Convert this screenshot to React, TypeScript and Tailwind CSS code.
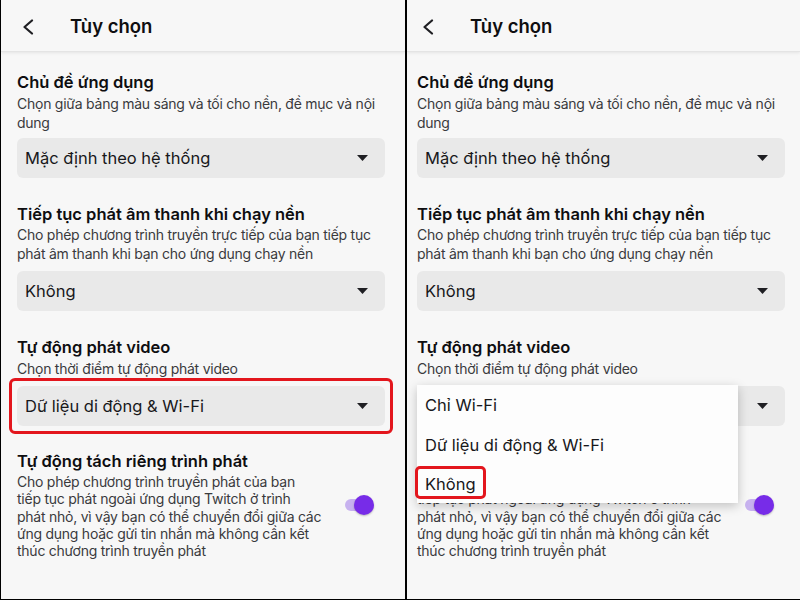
import React from "react";

const FONT = { fontFamily: "Inter, 'Noto Sans', sans-serif" };

function Caret() {
  return (
    <svg width="11" height="6" viewBox="0 0 11 6" className="shrink-0">
      <path d="M0 0 L11 0 L5.5 6 Z" fill="#1f1f23" />
    </svg>
  );
}

function Chevron() {
  return (
    <svg width="12" height="16" viewBox="0 0 12 16" className="shrink-0">
      <path d="M10 1.5 L2.5 8 L10 14.5" fill="none" stroke="#1f1f23" strokeWidth="2.2" strokeLinecap="round" strokeLinejoin="round" />
    </svg>
  );
}

function Select({ label, hideText }: { label: string; hideText?: boolean }) {
  return (
    <div className="w-[368px] h-10 rounded-md bg-[#e9e9e9] flex items-center justify-between pl-2 pr-[17px]">
      <span className={"text-[16.5px] text-[#18181b] whitespace-nowrap " + (hideText ? "opacity-0" : "")}>{label}</span>
      <Caret />
    </div>
  );
}

function Lines({ lines, leading }: { lines: string[]; leading: string }) {
  return (
    <div className={"mt-px text-[14px] tracking-[-0.25px] text-[#3a3a3d] " + leading}>
      {lines.map((l, i) => (
        <div key={i} className="whitespace-nowrap">{l}</div>
      ))}
    </div>
  );
}

function Title({ children }: { children: React.ReactNode }) {
  return <div className="text-[16.5px] font-semibold leading-[22px] text-[#0e0e10] whitespace-nowrap">{children}</div>;
}

function Toggle() {
  return (
    <div className="w-[51px] shrink-0 flex items-center justify-center">
      <div className="relative w-[29px] h-[20px] flex items-center">
        <div className="w-[24px] h-[12px] rounded-full bg-[#c7b2ef]" />
        <div className="absolute right-0 top-0 w-[20px] h-[20px] rounded-full bg-[#772ce8] shadow-[0_1px_2px_rgba(0,0,0,0.25)]" />
      </div>
    </div>
  );
}

function Panel({ right }: { right: boolean }) {
  const pad = right ? "pl-[10px]" : "pl-4";
  return (
    <div className={"flex flex-col h-full bg-[#f7f7f7] " + (right ? "flex-1" : "w-[404px]")} style={FONT}>
      <div className="h-[52px] pt-[3px] flex items-center bg-[#f7f7f7] border-b border-[#e4e4e4] shadow-[0_1px_3px_rgba(0,0,0,0.08)]">
        <div className={right ? "ml-[15px]" : "ml-[21px]"}>
          <Chevron />
        </div>
        <div className="text-[18.5px] font-semibold text-[#0e0e10] ml-[36px]">Tùy chọn</div>
      </div>
      <div className={"flex flex-col " + pad}>
        <div className="mt-[19px]">
          <Title>Chủ đề ứng dụng</Title>
          <Lines leading="leading-[19px]" lines={["Chọn giữa bảng màu sáng và tối cho nền, đề mục và nội", "dung"]} />
          <div className="mt-[6px]">
            <Select label="Mặc định theo hệ thống" />
          </div>
        </div>
        <div className="mt-[25px]">
          <Title>Tiếp tục phát âm thanh khi chạy nền</Title>
          <Lines leading="leading-[18.5px]" lines={["Cho phép chương trình truyền trực tiếp của bạn tiếp tục", "phát âm thanh khi bạn cho ứng dụng chạy nền"]} />
          <div className="mt-2">
            <Select label="Không" />
          </div>
        </div>
        <div className="mt-[25px]">
          <Title>Tự động phát video</Title>
          <Lines leading="leading-[19px]" lines={["Chọn thời điểm tự động phát video"]} />
          <div className="mt-2 relative">
            {right ? (
              <>
                <Select label="Dữ liệu di động & Wi-Fi" hideText />
                <div className="absolute left-0 -top-px w-[321px] h-[118px] bg-[#fdfdfd] shadow-[0_3px_10px_rgba(0,0,0,0.22)] z-10 flex flex-col">
                  <div className="h-10 flex items-center pl-2 text-[16.5px] text-[#18181b]">Chỉ Wi-Fi</div>
                  <div className="h-10 flex items-center pl-2 text-[16.5px] text-[#18181b]">Dữ liệu di động &amp; Wi-Fi</div>
                  <div className="h-[38px] flex items-center pl-2 text-[16.5px] text-[#18181b] relative">
                    <span>Không</span>
                    <div className="absolute -left-[2px] top-[1px] w-[71px] h-[33px] border-[3px] border-[#e3161d] rounded-[5px]" />
                  </div>
                </div>
              </>
            ) : (
              <div className="-mx-2 -my-2 p-[5px] border-[3px] border-[#e3161d] rounded-[6px] w-[384px]">
                <Select label="Dữ liệu di động & Wi-Fi" />
              </div>
            )}
          </div>
        </div>
        <div className="mt-[24px] flex items-center w-[368px]">
          <div className="flex-1 min-w-0">
            <Title>Tự động tách riêng trình phát</Title>
            <Lines
              leading="leading-[17.3px]"
              lines={[
                "Cho phép chương trình truyền phát của bạn",
                "tiếp tục phát ngoài ứng dụng Twitch ở trình",
                "phát nhỏ, vì vậy bạn có thể chuyển đổi giữa các",
                "ứng dụng hoặc gửi tin nhắn mà không cần kết",
                "thúc chương trình truyền phát",
              ]}
            />
          </div>
          <Toggle />
        </div>
      </div>
    </div>
  );
}

export default function App() {
  return (
    <div className="w-[800px] h-[600px] flex bg-[#f7f7f7] border-l border-b border-black overflow-hidden">
      <Panel right={false} />
      <div className="w-[2px] h-full bg-black shrink-0" />
      <Panel right={true} />
    </div>
  );
}
